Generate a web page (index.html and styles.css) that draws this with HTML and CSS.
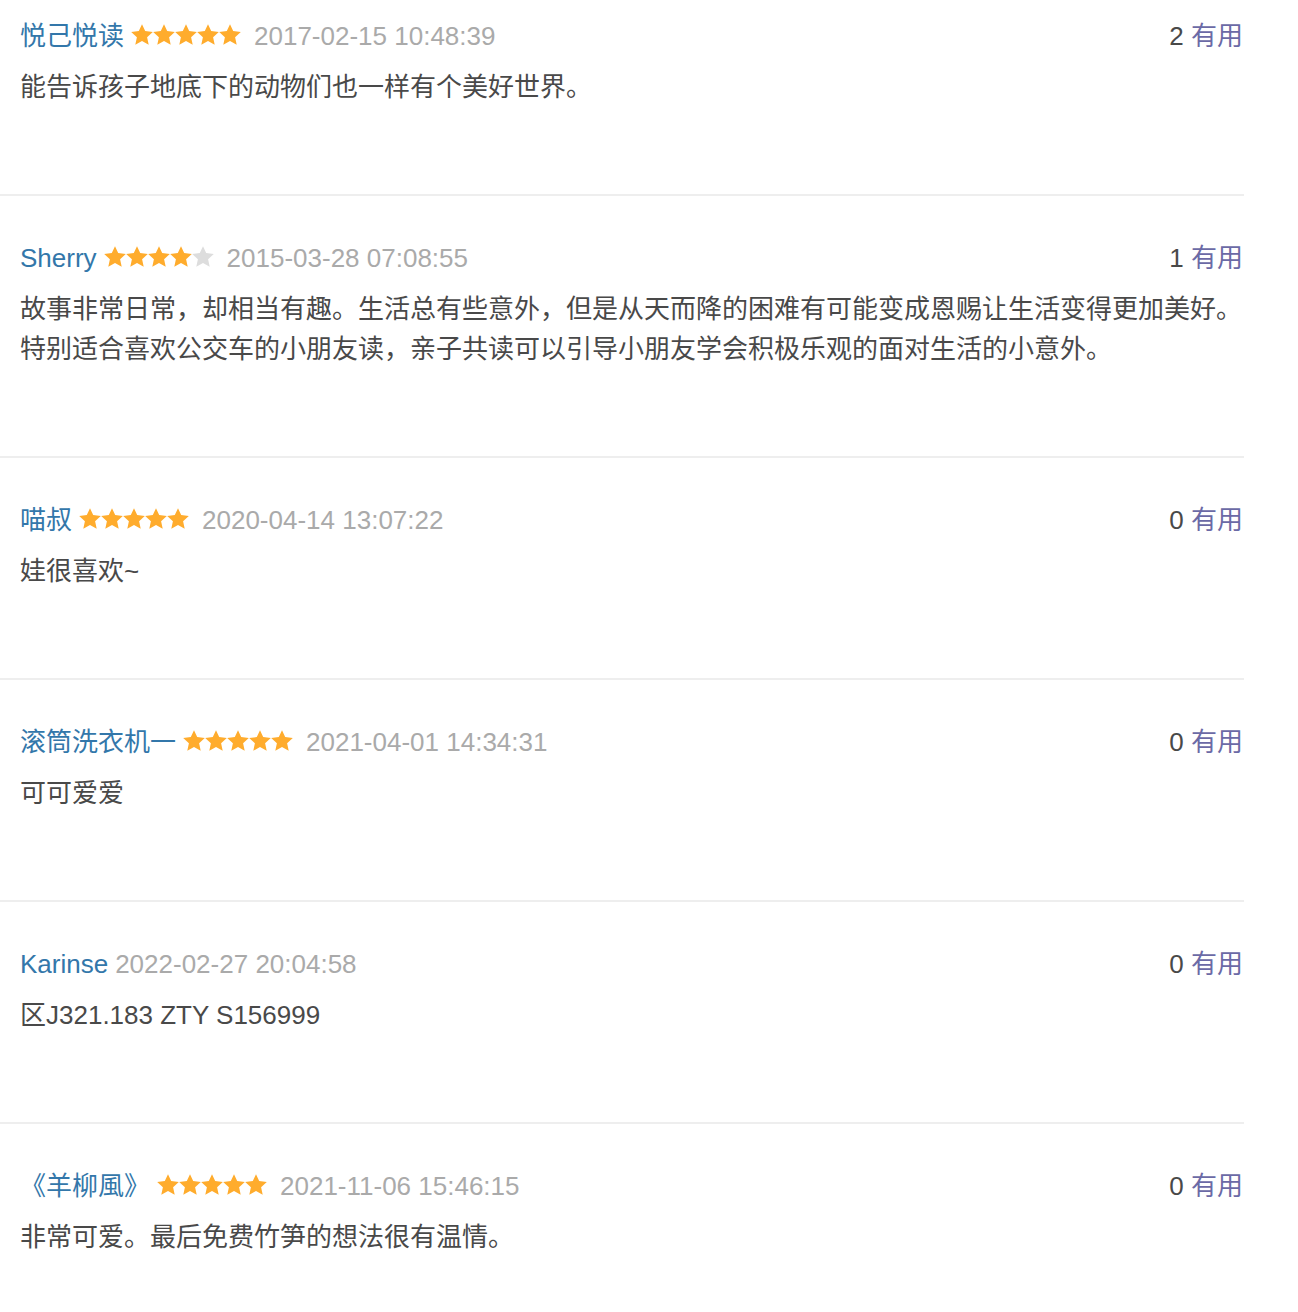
FILE: index.html
```html
<!DOCTYPE html>
<html lang="zh-CN">
<head>
<meta charset="utf-8">
<title>短评</title>
<link rel="stylesheet" href="styles.css">
</head>
<body>
<svg width="0" height="0" class="defs" aria-hidden="true">
  <defs>
    <polygon id="star" points="11,0.3 14.2,7.1 21.8,8 16.1,13.2 17.7,20.8 11,16.9 4.3,20.8 5.9,13.2 0.2,8 7.8,7.1"/>
  </defs>
</svg>
<div class="list">
  <div class="item">
    <div class="head">
      <div class="meta"><span class="name">悦己悦读</span> <svg class="stars" viewBox="0 0 110 22"><use href="#star" class="on"/><use href="#star" x="22" class="on"/><use href="#star" x="44" class="on"/><use href="#star" x="66" class="on"/><use href="#star" x="88" class="on"/></svg><span class="date">2017-02-15 10:48:39</span></div>
      <div class="vote"><span class="count">2</span> <span class="useful">有用</span></div>
    </div>
    <p class="text">能告诉孩子地底下的动物们也一样有个美好世界。</p>
  </div>
  <div class="item">
    <div class="head">
      <div class="meta"><span class="name">Sherry</span> <svg class="stars" viewBox="0 0 110 22"><use href="#star" class="on"/><use href="#star" x="22" class="on"/><use href="#star" x="44" class="on"/><use href="#star" x="66" class="on"/><use href="#star" x="88" class="off"/></svg><span class="date">2015-03-28 07:08:55</span></div>
      <div class="vote"><span class="count">1</span> <span class="useful">有用</span></div>
    </div>
    <p class="text">故事非常日常，却相当有趣。生活总有些意外，但是从天而降的困难有可能变成恩赐让生活变得更加美好。<br>特别适合喜欢公交车的小朋友读，亲子共读可以引导小朋友学会积极乐观的面对生活的小意外。</p>
  </div>
  <div class="item">
    <div class="head">
      <div class="meta"><span class="name">喵叔</span> <svg class="stars" viewBox="0 0 110 22"><use href="#star" class="on"/><use href="#star" x="22" class="on"/><use href="#star" x="44" class="on"/><use href="#star" x="66" class="on"/><use href="#star" x="88" class="on"/></svg><span class="date">2020-04-14 13:07:22</span></div>
      <div class="vote"><span class="count">0</span> <span class="useful">有用</span></div>
    </div>
    <p class="text">娃很喜欢~</p>
  </div>
  <div class="item">
    <div class="head">
      <div class="meta"><span class="name">滚筒洗衣机一</span> <svg class="stars" viewBox="0 0 110 22"><use href="#star" class="on"/><use href="#star" x="22" class="on"/><use href="#star" x="44" class="on"/><use href="#star" x="66" class="on"/><use href="#star" x="88" class="on"/></svg><span class="date">2021-04-01 14:34:31</span></div>
      <div class="vote"><span class="count">0</span> <span class="useful">有用</span></div>
    </div>
    <p class="text">可可爱爱</p>
  </div>
  <div class="item">
    <div class="head">
      <div class="meta"><span class="name">Karinse</span> <span class="date">2022-02-27 20:04:58</span></div>
      <div class="vote"><span class="count">0</span> <span class="useful">有用</span></div>
    </div>
    <p class="text">区J321.183 ZTY S156999</p>
  </div>
  <div class="item">
    <div class="head">
      <div class="meta"><span class="name">《羊柳風》</span> <svg class="stars" viewBox="0 0 110 22"><use href="#star" class="on"/><use href="#star" x="22" class="on"/><use href="#star" x="44" class="on"/><use href="#star" x="66" class="on"/><use href="#star" x="88" class="on"/></svg><span class="date">2021-11-06 15:46:15</span></div>
      <div class="vote"><span class="count">0</span> <span class="useful">有用</span></div>
    </div>
    <p class="text">非常可爱。最后免费竹笋的想法很有温情。</p>
  </div>
</div>
</body>
</html>
```

FILE: styles.css
```css
html, body {
  margin: 0;
  padding: 0;
  background: #fff;
}

body {
  font-family: "Liberation Sans", Arial, "Noto Sans CJK SC", sans-serif;
  font-size: 26px;
  color: #494949;
}

.defs {
  position: absolute;
  width: 0;
  height: 0;
}

.list {
  width: 1244px;
}

.item {
  padding: 42px 1px 87px 20px;
  border-bottom: 2px solid #eeeeee;
}

.item:first-child {
  padding-top: 16px;
}

.head {
  display: flex;
  justify-content: space-between;
  align-items: center;
  height: 40px;
  line-height: 40px;
  white-space: nowrap;
}

.meta {
  display: flex;
  align-items: center;
}

.name {
  color: #3377aa;
  margin-right: 7px;
}

.stars {
  width: 110px;
  height: 22px;
  margin-right: 13px;
  margin-top: -3px;
  flex: none;
}

.stars .on {
  fill: #ffac2d;
}

.stars .off {
  fill: #dddddd;
}

.date {
  color: #aaaaaa;
}

.count {
  color: #494949;
}

.useful {
  color: #6b6aa6;
}

.text {
  margin: 11px 0 0;
  line-height: 40px;
  color: #494949;
}
```
